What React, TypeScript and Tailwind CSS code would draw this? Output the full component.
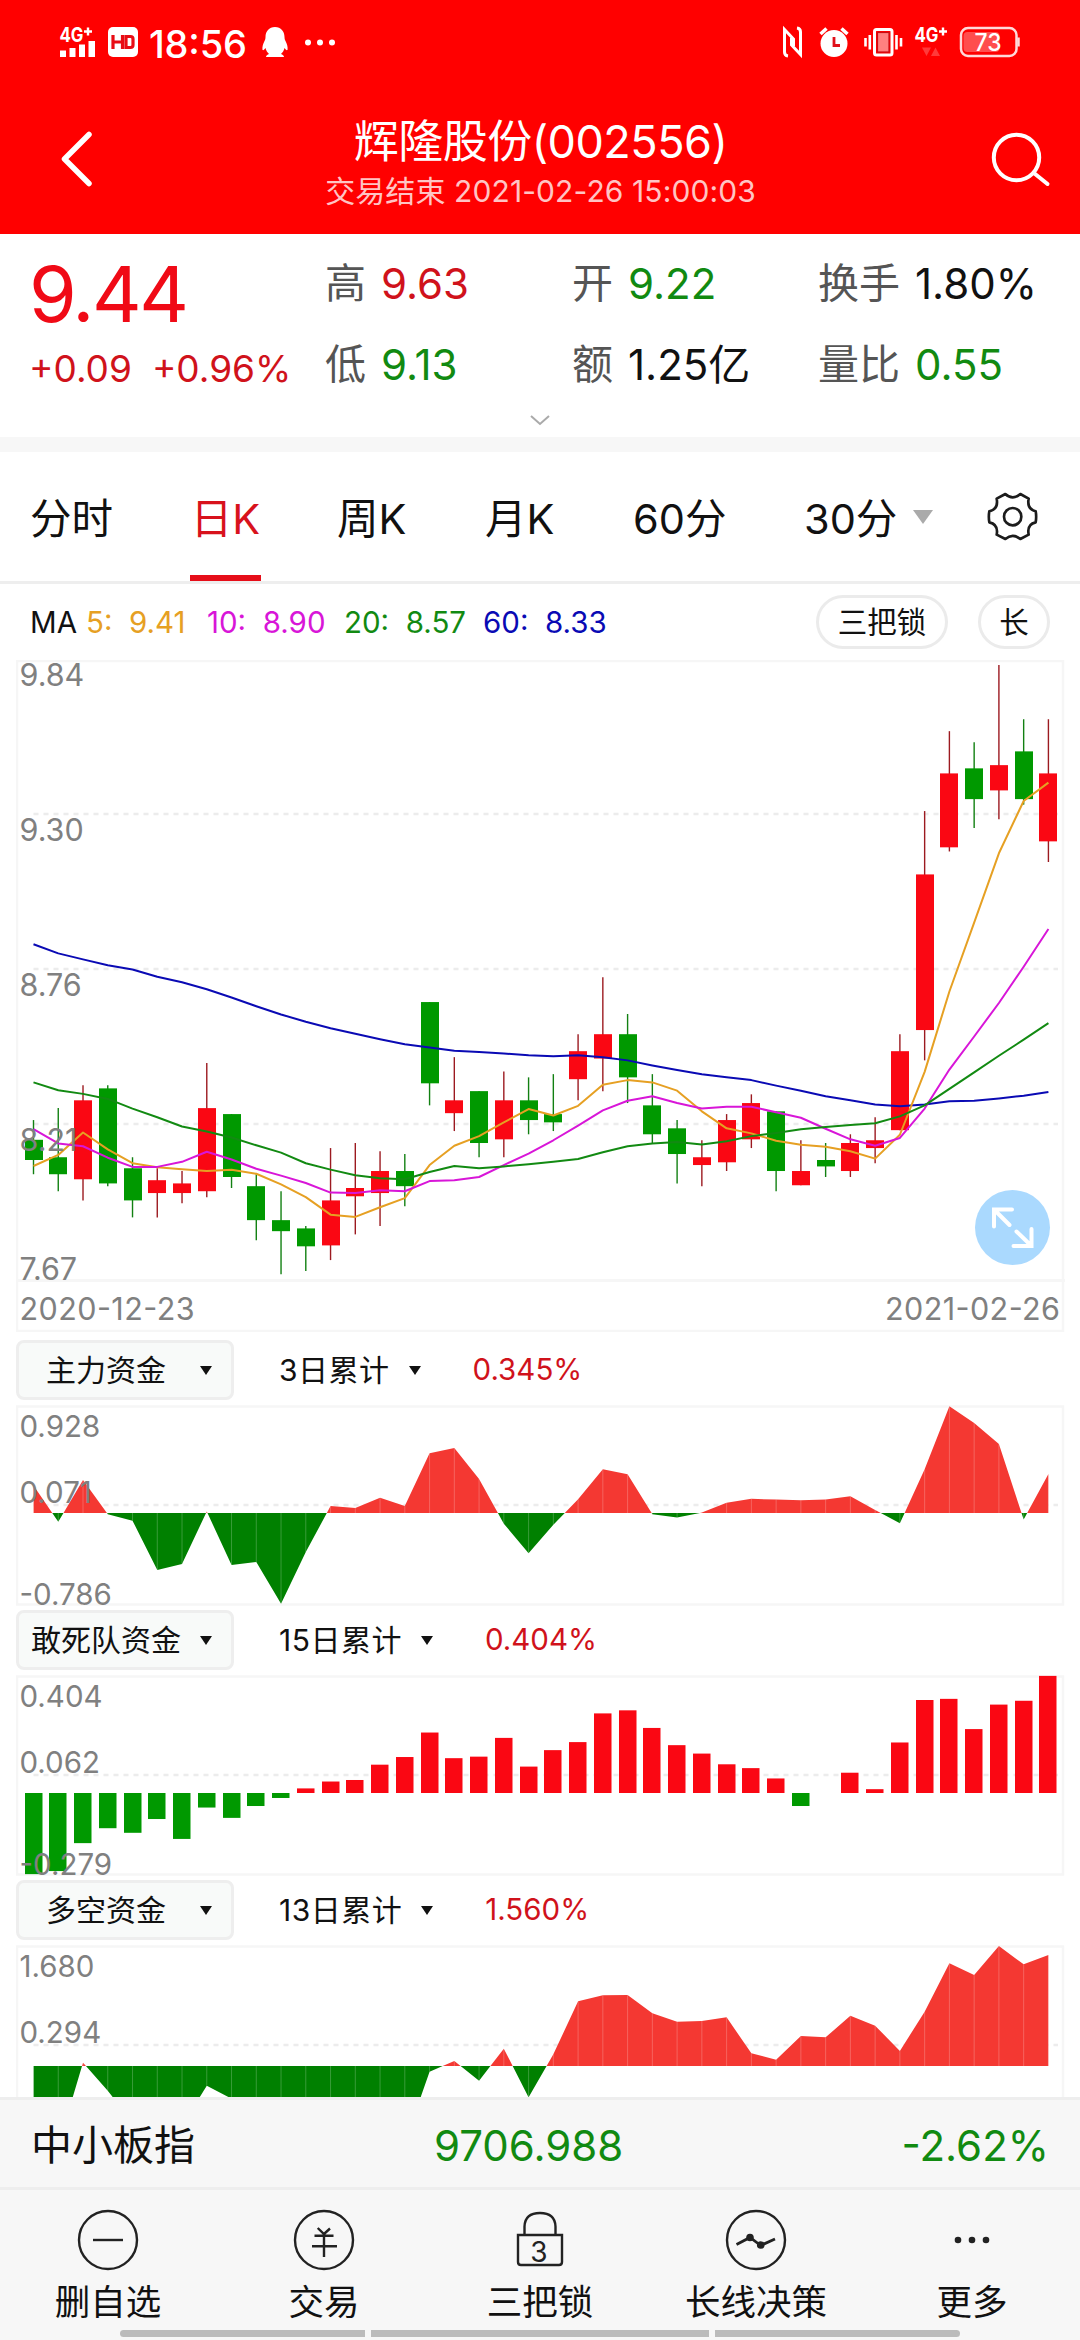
import React from "react";

const STEP = 24.754;
const FIRST = 17.5;
const cx = (i: number) => FIRST + i * STEP;

// [direction, high, body top, body bottom, low]
const candles: [string, number, number, number, number][] = [
  ["g", 1045, 1088, 1132, 1163], ["g", 1019, 1126, 1163, 1200], ["r", 969, 1002, 1174, 1220],
  ["g", 969, 976, 1183, 1189], ["g", 1126, 1150, 1220, 1257], ["r", 1150, 1176, 1204, 1257],
  ["r", 1156, 1183, 1204, 1226], ["r", 921, 1019, 1200, 1213], ["g", 1032, 1032, 1169, 1193],
  ["g", 1163, 1189, 1263, 1307], ["g", 1200, 1263, 1287, 1381], ["g", 1276, 1281, 1320, 1374],
  ["r", 1106, 1220, 1318, 1350], ["r", 1095, 1193, 1211, 1294], ["r", 1113, 1156, 1204, 1276],
  ["g", 1119, 1156, 1189, 1233], ["g", 788, 788, 965, 1013], ["r", 908, 1002, 1030, 1069],
  ["g", 982, 982, 1095, 1126], ["r", 939, 1002, 1087, 1126], ["g", 952, 1002, 1045, 1076],
  ["g", 945, 1032, 1050, 1069], ["r", 858, 895, 956, 1002], ["r", 734, 858, 911, 982],
  ["g", 814, 858, 952, 1008], ["g", 945, 1013, 1076, 1095], ["g", 1045, 1063, 1119, 1183],
  ["r", 1089, 1126, 1143, 1189], ["r", 1032, 1045, 1137, 1156], ["r", 989, 1008, 1087, 1106],
  ["g", 1026, 1026, 1156, 1200], ["r", 1089, 1156, 1187, 1187], ["g", 1095, 1132, 1146, 1169],
  ["r", 1076, 1095, 1156, 1169], ["r", 1039, 1089, 1106, 1139], ["r", 858, 895, 1067, 1067],
  ["r", 372, 510, 849, 915], ["r", 198, 290, 451, 460], ["g", 222, 279, 346, 409],
  ["r", 54, 272, 327, 390], ["g", 172, 242, 346, 358], ["r", 172, 290, 438, 483],
];

const averages = [
  { color: "#0a0ab4", data: [662, 682, 695, 708, 717, 733, 745, 760, 778, 797, 815, 831, 845, 857, 869, 880, 887, 894, 897, 900, 904, 906, 904, 908, 915, 926, 936, 945, 952, 958, 970, 981, 993, 1002, 1011, 1015, 1011, 1004, 1003, 998, 992, 984] },
  { color: "#e6a023", data: [1145, 1121, 1072, 1109, 1139, 1148, 1152, 1156, 1153, 1162, 1185, 1213, 1251, 1256, 1235, 1215, 1143, 1101, 1080, 1050, 1021, 1035, 1014, 968, 958, 963, 981, 1026, 1063, 1074, 1090, 1099, 1103, 1113, 1129, 1077, 940, 765, 615, 464, 350, 310] },
  { color: "#d816d8", data: [1065, 1096, 1102, 1127, 1147, 1147, 1136, 1114, 1131, 1151, 1166, 1182, 1203, 1204, 1198, 1200, 1178, 1176, 1169, 1143, 1118, 1089, 1057, 1024, 1003, 993, 1008, 1020, 1016, 1016, 1028, 1040, 1064, 1087, 1101, 1084, 1020, 935, 863, 790, 711, 629] },
  { color: "#128a12", data: [963, 980, 988, 999, 1020, 1039, 1059, 1070, 1083, 1100, 1116, 1139, 1153, 1165, 1172, 1174, 1158, 1145, 1150, 1146, 1141, 1136, 1130, 1115, 1102, 1096, 1093, 1098, 1091, 1080, 1073, 1065, 1060, 1056, 1052, 1037, 1013, 977, 941, 905, 870, 834] },
];

const mainFund = [72, -23, 86, -3, -20, -149, -133, 4, -136, -128, -237, -102, 18, 13, 40, 18, 156, 170, 89, -28, -105, -31, 36, 114, 101, -3, -12, 1, 27, 37, 35, 33, 35, 44, 8, -27, 114, 279, 235, 180, -17, 102].map((v) => v / 2.613);
const braveFund = [-212, -204, -131, -92, -104, -68, -120, -38, -65, -34, -13, 12, 30, 34, 74, 94, 158, 91, 95, 144, 69, 112, 133, 208, 216, 170, 125, 103, 75, 65, 38, -34, 0, 53, 10, 132, 243, 246, 167, 231, 241, 306].map((v) => v / 2.613);
const bullFund = [-240, -240, 10, -74, -170, -180, -180, -59, -98, -160, -180, -180, -180, -180, -180, -230, -17, 15, -44, 52, -94, 35, 194, 212, 213, 158, 133, 135, 146, 38, 19, 90, 86, 151, 121, 45, 163, 308, 273, 360, 305, 333].map((v) => v / 3);

function Grid({ y }: { y: number }) {
  return <line x1={FIRST} x2="1042" y1={y} y2={y} stroke="#ececec" strokeWidth="2.5" strokeDasharray="5 5" />;
}

function Label({ y, size = 30.5, children }: { y: number; size?: number; children: string }) {
  return <text x="3.5" y={y} fill="#808080" fontSize={size}>{children}</text>;
}

function KLine() {
  const y = (v: number) => (v - 43) / 2.178;
  return (
    <svg width="1049" height="672" className="block">
      <rect x="1" y="1" width="1046" height="670" fill="none" stroke="#f6f6f6" strokeWidth="2.5" />
      <line x1="0" x2="1049" y1="620.5" y2="620.5" stroke="#f6f6f6" strokeWidth="3" />
      <Grid y={154} />
      <Grid y={309} />
      <Grid y={464} />
      {candles.map(([dir, high, top, bottom, low], i) => (
        <g key={i}>
          <line x1={cx(i)} x2={cx(i)} y1={y(high)} y2={y(low)} stroke={dir === "r" ? "#9c1a20" : "#128012"} strokeWidth="1.4" />
          <rect x={Math.round(cx(i) - 9)} y={y(top)} width="18" height={y(bottom) - y(top)} fill={dir === "r" ? "#fa0713" : "#009900"} />
        </g>
      ))}
      {averages.map((line) => (
        <polyline key={line.color} points={line.data.map((v, i) => `${cx(i)},${y(v)}`).join(" ")} fill="none" stroke={line.color} strokeWidth="2" strokeLinejoin="round" />
      ))}
      <Label y={25.5}>9.84</Label>
      <Label y={180.5}>9.30</Label>
      <Label y={335.5}>8.76</Label>
      <Label y={490.5}>8.21</Label>
      <Label y={620}>7.67</Label>
      <text x="3.5" y="660" fill="#808080" fontSize="30.5" textLength="175">2020-12-23</text>
      <text x="1044" y="660" textAnchor="end" fill="#808080" fontSize="30.5" textLength="175">2021-02-26</text>
    </svg>
  );
}

function Area({ id, zero, data }: { id: string; zero: number; data: number[] }) {
  const line = data.map((v, i) => `${cx(i)},${zero - v}`).join(" ");
  const points = `${cx(0)},${zero} ${line} ${cx(data.length - 1)},${zero}`;
  return (
    <g>
      <clipPath id={`${id}-up`}><rect x="0" y="0" width="1049" height={zero} /></clipPath>
      <clipPath id={`${id}-down`}><rect x="0" y={zero} width="1049" height="200" /></clipPath>
      <polygon points={points} fill="#f43832" clipPath={`url(#${id}-up)`} />
      <polygon points={points} fill="#008000" clipPath={`url(#${id}-down)`} />
      {data.map((v, i) => (
        <line key={i} x1={cx(i)} x2={cx(i)} y1={zero} y2={zero - v} stroke="#ffffff" strokeOpacity="0.22" strokeWidth="1" />
      ))}
    </g>
  );
}

function Bars({ zero, data }: { zero: number; data: number[] }) {
  return (
    <g>
      {data.map((v, i) => (
        <rect key={i} x={Math.round(cx(i) - 9)} y={v > 0 ? zero - v : zero} width="17.5" height={Math.abs(v)} fill={v > 0 ? "#fa0713" : "#009900"} />
      ))}
    </g>
  );
}

function Caret() {
  return <svg width="12" height="9" className="block shrink-0"><path d="M0 0h12L6 9z" fill="#111" /></svg>;
}

type PanelProps = { name: string; period: string; value: string; labels: string[]; gridY: number; children: React.ReactNode };

function Panel({ name, period, value, labels, gridY, children }: PanelProps) {
  return (
    <section className="h-[270px] shrink-0 pl-4">
      <div className="flex h-[60px] items-center text-[30px] leading-none text-[#111]">
        <div className="flex h-[60px] w-[218px] items-center rounded-lg border-[3px] border-[#eee] bg-[#f8faf9]">
          <span className="mr-[7px] w-[174px] text-center">{name}</span>
          <Caret />
        </div>
        <span className="ml-[45px] mr-[19px] tracking-[0.5px]">{period}</span>
        <Caret />
        <span className="ml-[52px] text-[29.5px]">
          <span className="text-[#d0121b]">{value}</span>
        </span>
      </div>
      <svg width="1049" height="201" className="mt-[5px] block">
        <rect x="1" y="1.5" width="1046" height="198" fill="none" stroke="#f6f6f6" strokeWidth="2.5" />
        <Grid y={gridY} />
        {children}
        {labels.map((label, i) => (
          <Label key={label} y={[32, 98, 200][i]} size={29.5}>{label}</Label>
        ))}
      </svg>
    </section>
  );
}

function StatusBar() {
  return (
    <div className="flex h-[84px] items-start pt-[17px] text-white">
      <svg width="290" height="50" viewBox="50 17 290 50" className="ml-[50px] block overflow-visible" fill="currentColor">
        <text x="59.5" y="42" fontSize="20" fontWeight="700" textLength="24" lengthAdjust="spacingAndGlyphs">4G</text>
        <path d="M84 31.5h8M88 27.5v8" stroke="currentColor" strokeWidth="2.4" />
        <path d="M60 50.5h6v6.5h-6zM69.500 48h6v9h-6zM79 44.500h6v12.500h-6zM88.500 41h6.500v16h-6.500z" />
        <rect x="108" y="27" width="30" height="30" rx="5" />
        <path d="M113 35v14M122.500 35v14M113 42h9.500M126 36.500h4.500q2.500 0 2.500 2.500v6q0 2.500-2.500 2.500h-4.500z" fill="none" stroke="#e80c14" strokeWidth="3.200" />
        <text x="149" y="57.500" fontSize="38" fontWeight="500" textLength="98">18:56</text>
        <path d="M275 27c-6 0-9.500 4.500-9.500 10 0 2-.5 3-1 4-1.500 3-2.500 6-2 9 1 .5 2-.5 3-2 .5 2.500 2 4.500 3.500 6-1.500.5-3 1.500-3 3h18c0-1.500-1.500-2.500-3-3 1.500-1.500 3-3.500 3.500-6 1 1.500 2 2.500 3 2 .5-3-.5-6-2-9-.5-1-1-2-1-4 0-5.500-3.500-10-9.500-10z" />
        <circle cx="308" cy="42.500" r="3" />
        <circle cx="320" cy="42.500" r="3" />
        <circle cx="332" cy="42.500" r="3" />
      </svg>
      <svg width="250" height="50" viewBox="780 17 250 50" className="ml-auto mr-[50px] block overflow-visible" fill="currentColor">
        <path d="M788 56q-3.500-.5-3.500-4V29.500l9 9.500v7M797 28q3.500.5 3.500 4v22.500l-9-9.500v-7" fill="none" stroke="currentColor" strokeWidth="3" />
        <circle cx="834" cy="43.500" r="13.500" />
        <path d="M820.500 34l6-5.500M847.500 34l-6-5.500" stroke="currentColor" strokeWidth="3.500" />
        <path d="M834 37v8.500h6" fill="none" stroke="#e0101a" strokeWidth="2.800" />
        <rect x="874.500" y="29.500" width="17.500" height="25.500" rx="2" fill="none" stroke="currentColor" strokeWidth="3" />
        <rect x="877.500" y="32.500" width="11.500" height="19.500" fill="#ff8080" stroke="#c80c14" strokeWidth="1.200" />
        <path d="M865.500 38v8.500M869.800 35v14.500M901 38v8.500M896.500 35v14.500" stroke="currentColor" strokeWidth="2.600" />
        <text x="914.5" y="42" fontSize="20" fontWeight="700" textLength="24" lengthAdjust="spacingAndGlyphs">4G</text>
        <path d="M939 31.500h8M943 27.500v8" stroke="currentColor" strokeWidth="2.400" />
        <path d="M922 47.500h9l-4.500 8.500zM931 56h9l-4.500-8.500z" fill="#ff3a3a" />
        <rect x="961" y="28" width="55.500" height="28" rx="7" fill="none" stroke="#ffd9d9" strokeWidth="2.500" />
        <rect x="963.500" y="32" width="36" height="20" rx="4" fill="#ff4d4d" />
        <path d="M1018.500 37.500v9" stroke="#ffd9d9" strokeWidth="2.500" />
        <text x="974.5" y="51" fontSize="24" fontWeight="500" textLength="27" lengthAdjust="spacingAndGlyphs">73</text>
      </svg>
    </div>
  );
}

function Header() {
  return (
    <header className="h-[234px] shrink-0 bg-[#ff0000] text-white">
      <StatusBar />
      <div className="flex h-[150px] items-start justify-between">
        <svg width="40" height="64" viewBox="56 127 40 64" className="ml-14 mt-[43px]" fill="none" stroke="currentColor" strokeWidth="5.5" strokeLinecap="round" strokeLinejoin="round">
          <path d="M89 134.5L64.500 159 89 183.500" />
        </svg>
        <div className="mt-[35px] flex flex-col items-center whitespace-nowrap pr-[5px]">
          <h1 className="text-[45px] leading-[46px] tracking-[-0.5px]">辉隆股份(002556)</h1>
          <p className="mt-[9px] text-[30px] leading-[34px] tracking-[0.1px] text-[#ffc4c4]">交易结束 2021-02-26 15:00:03</p>
        </div>
        <svg width="62" height="56" viewBox="990 131 62 56" className="mr-7 mt-[47px]" fill="none" stroke="currentColor" strokeWidth="4" strokeLinecap="round">
          <circle cx="1016.5" cy="157.500" r="22.700" />
          <path d="M1034.500 173.500L1047.500 184" />
        </svg>
      </div>
    </header>
  );
}

const quotes = [
  { label: "高", value: "9.63", color: "text-[#d0121b]" },
  { label: "开", value: "9.22", color: "text-[#118a11]" },
  { label: "换手", value: "1.80%", color: "text-[#111]" },
  { label: "低", value: "9.13", color: "text-[#118a11]" },
  { label: "额", value: "1.25亿", color: "text-[#111]" },
  { label: "量比", value: "0.55", color: "text-[#118a11]" },
];

function Quote() {
  return (
    <section className="h-[203px] shrink-0">
      <div className="flex h-[176px] whitespace-nowrap">
        <div className="w-[325px] shrink-0 pl-[29px] pt-[21px]">
          <div className="text-[77px] leading-[78px] tracking-[-2.5px] text-[#f00a16]">9.44</div>
          <div className="mt-[14px] flex gap-[20px] text-[37px] leading-[44px] text-[#d0121b]">
            <span>+0.09</span>
            <span>+0.96%</span>
          </div>
        </div>
        <div className="grid grid-cols-[247px_246px_1fr] grid-rows-[81px_81px] pt-[9px] text-[41px]">
          {quotes.map((q) => (
            <div key={q.label} className="flex items-center gap-[15px]">
              <span className="text-[#555]">{q.label}</span>
              <span className={`${q.color} text-[42px]`}>{q.value}</span>
            </div>
          ))}
        </div>
      </div>
      <svg width="20" height="12" className="mx-auto mt-[5px] block" fill="none" stroke="#aaa" strokeWidth="2">
        <path d="M1 1l9 8 9-8" />
      </svg>
    </section>
  );
}

const tabs = [
  { name: "分时", width: "w-[163px]" },
  { name: "日K", width: "w-[144px]" },
  { name: "周K", width: "w-[148px]" },
  { name: "月K", width: "w-[148px]" },
  { name: "60分", width: "w-[171px]" },
  { name: "30分", width: "w-[109px]" },
];

function Tabs() {
  return (
    <nav className="flex h-[132px] shrink-0 items-center border-b-[3px] border-[#eee] pl-[30px] text-[41.5px] text-[#111]">
      {tabs.map((tab) => (
        <div key={tab.name} className={`${tab.width} flex h-full shrink-0 items-start whitespace-nowrap`}>
          {tab.name === "日K" ? (
            <div className="-ml-[3px] flex h-full w-[71px] flex-col items-center border-b-[6px] border-[#e60e19] pt-[37px] leading-[60px] text-[#d8121c]">{tab.name}</div>
          ) : (
            <div className="pt-[37px] leading-[60px]">{tab.name}</div>
          )}
        </div>
      ))}
      <svg width="20" height="14" className="block"><path d="M0 0h20L10 14z" fill="#aaa" /></svg>
      <svg width="64" height="64" viewBox="0 0 192 192" className="ml-[47px] block" fill="none" stroke="#1c1c1c" strokeWidth="8" strokeLinejoin="round">
        <path d="M76 27Q98 47 121 27L146 41Q140 72 167 79Q170 95 167 112Q140 118 146 149L121 162Q98 143 76 162L50 149Q56 118 28 112Q25 95 28 79Q56 72 50 41Z" />
        <circle cx="98" cy="95" r="26" />
      </svg>
    </nav>
  );
}

function MaRow() {
  return (
    <div className="flex h-[76px] shrink-0 items-center whitespace-nowrap pl-[30px] text-[29.5px] text-[#111]">
      <span className="mr-[9px]">MA</span>
      <span className="w-[121px] text-[#e6a023]">5:&nbsp; 9.41</span>
      <span className="w-[137px] text-[#d816d8]">10:&nbsp; 8.90</span>
      <span className="w-[139px] text-[#128a12]">20:&nbsp; 8.57</span>
      <span className="text-[#0a0ab4]">60:&nbsp; 8.33</span>
      <span className="ml-auto flex h-[54px] w-[132px] items-center justify-center rounded-full border-[3px] border-[#ebebeb]">三把锁</span>
      <span className="ml-[30px] mr-[30px] flex h-[54px] w-[72px] items-center justify-center rounded-full border-[3px] border-[#ebebeb]">长</span>
    </div>
  );
}

const actions = [
  { name: "删自选", icon: <><circle cx="32" cy="32" r="29" /><path d="M17 32h30" /></> },
  { name: "交易", icon: <><circle cx="32" cy="32" r="29" /><path d="M25.700 20l6.300 6 6-5.500M22.500 27.700h19M20 38.300h25M32 26v23" /></> },
  { name: "三把锁", icon: <><path d="M10 27h44v27q0 3-3 3H13q-3 0-3-3zM16.500 27V18.500Q17 5 32 5t15.500 13.500V27" /><text x="31" y="54" textAnchor="middle" fontSize="28" fill="#222" stroke="none">3</text></> },
  { name: "长线决策", icon: <><circle cx="32" cy="32" r="29" /><path d="M12.500 36.500L26 29.500l10.700 8L51 31" strokeWidth="2.800" /><circle cx="26" cy="29.500" r="2.600" fill="#222" /><circle cx="36.700" cy="37" r="2.600" fill="#222" /></> },
  { name: "更多", icon: <g fill="#222" stroke="none"><circle cx="18" cy="32" r="3.300" /><circle cx="32" cy="32" r="3.300" /><circle cx="46" cy="32" r="3.300" /></g> },
];

export default function App() {
  return (
    <div className="flex h-[2340px] w-[1080px] flex-col overflow-hidden bg-white font-['Inter','Noto_Sans_CJK_SC',sans-serif]">
      <Header />
      <Quote />
      <div className="h-[15px] shrink-0 bg-[#f7f7f7]" />
      <Tabs />
      <MaRow />
      <main className="flex min-h-0 flex-1 flex-col overflow-hidden">
        <div className="relative h-[680px] shrink-0 pl-4">
          <KLine />
          <button className="absolute left-[975px] top-[530px] flex h-[75px] w-[75px] items-center justify-center rounded-full bg-[#aad9fe]">
            <svg width="75" height="75" viewBox="975 1190 75 75" fill="none" stroke="#fff" strokeWidth="4" strokeLinecap="round">
              <path d="M1012 1209.500h-18v17M994.500 1210l15 15M1013.500 1246h18v-17M1031 1245.500l-14.500-14" />
            </svg>
          </button>
        </div>
        <Panel name="主力资金" period="3日累计" value="0.345%" labels={["0.928", "0.071", "-0.786"]} gridY={100}>
          <Area id="main" zero={108} data={mainFund} />
        </Panel>
        <Panel name="敢死队资金" period="15日累计" value="0.404%" labels={["0.404", "0.062", "-0.279"]} gridY={100}>
          <Bars zero={118} data={braveFund} />
        </Panel>
        <Panel name="多空资金" period="13日累计" value="1.560%" labels={["1.680", "0.294"]} gridY={100}>
          <Area id="bull" zero={121} data={bullFund} />
        </Panel>
      </main>
      <div className="flex h-[93px] shrink-0 items-center border-y-[3px] border-[#eee] bg-[#f7f7f7] px-[31px] pt-[4px] text-[41px] text-[#118a11]">
        <span className="w-[403px] text-[#111]">中小板指</span>
        <span className="text-[42px]">9706.988</span>
        <span className="ml-auto text-[42px]">-2.62%</span>
      </div>
      <footer className="h-[150px] shrink-0 bg-[#f7f7f7]">
        <div className="grid h-[140px] grid-cols-5 pt-[18px]">
          {actions.map((action) => (
            <div key={action.name} className="flex flex-col items-center text-[35.5px] leading-[46px] text-[#111]">
              <svg width="64" height="64" className="mb-[8px] block" fill="none" stroke="#222" strokeWidth="2.4">{action.icon}</svg>
              {action.name}
            </div>
          ))}
        </div>
        <div className="mx-auto flex h-[7px] w-[840px] gap-[6px] overflow-hidden rounded-full">
          <div className="w-[245px] bg-[#bbb]" />
          <div className="flex-1 bg-[#bbb]" />
          <div className="w-[245px] bg-[#bbb]" />
        </div>
      </footer>
    </div>
  );
}
